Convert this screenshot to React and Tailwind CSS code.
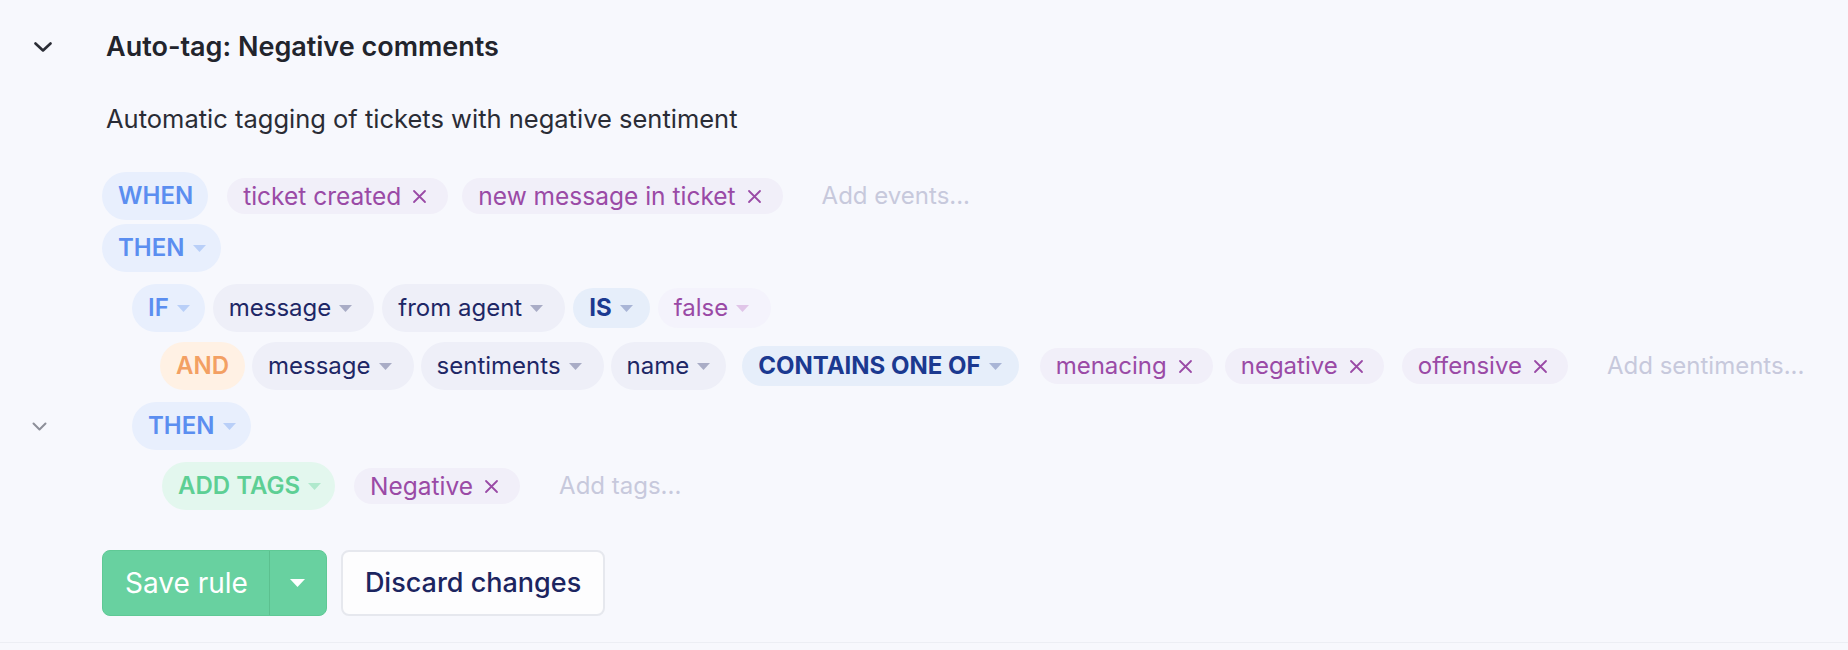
const FONT = { fontFamily: "Inter, 'Noto Sans', sans-serif" };

function Caret({ className = "" }) {
  return (
    <svg width="13" height="7" viewBox="0 0 13 7" className={"ml-[8px] shrink-0 " + className}>
      <path d="M0 0 H13 L6.5 7 Z" fill="currentColor" />
    </svg>
  );
}

function Cross() {
  return (
    <svg width="15" height="15" viewBox="0 0 15 15" className="ml-[11px] shrink-0">
      <path d="M2 2 L13 13 M13 2 L2 13" stroke="currentColor" strokeWidth="1.8" strokeLinecap="round" />
    </svg>
  );
}

// WHEN / THEN / IF
function Keyword({ children, caret = true }) {
  return (
    <div className="flex h-[48px] items-center rounded-full bg-[#e8effd] pl-[16px] pr-[15px] text-[24px] font-semibold text-[#5b8ef0]">
      <span>{children}</span>
      {caret && <Caret className="text-[#b9cff8]" />}
    </div>
  );
}

function Field({ children, tight = false }) {
  return (
    <div className={"flex h-[48px] items-center rounded-full bg-[#eeeff8] pl-[16px] text-[24px] text-[#1e2766] " + (tight ? "pr-[16px]" : "pr-[22px]")}>
      <span>{children}</span>
      <Caret className="text-[#a9acc6]" />
    </div>
  );
}

function Operator({ children }) {
  return (
    <div className="flex h-[40px] items-center rounded-full bg-[#e6eefa] pl-[16px] pr-[17px] text-[24px] font-bold text-[#1b3990]">
      <span>{children}</span>
      <Caret className="text-[#a9b5d6]" />
    </div>
  );
}

function Tag({ children, small = false, className = "" }) {
  return (
    <div className={"flex h-[36px] items-center rounded-full bg-[#f1eff9] pl-[16px] text-[#9a4aa6] " + (small ? "pr-[20px] text-[24px] " : "pr-[21px] text-[24.5px] ") + className}>
      <span>{children}</span>
      <Cross />
    </div>
  );
}

function Placeholder({ children }) {
  return <span className="pl-[39px] text-[24px] text-[#c7c9dc]">{children}</span>;
}

function Gutter({ children }) {
  return <div className="flex w-[102px] shrink-0 items-center">{children}</div>;
}

export default function App() {
  return (
    <div style={FONT} className="min-h-[650px] w-full bg-[#f7f8fd]">
      <div className="h-[643px] border-b border-[#eceef4] pt-[27px]">
        {/* header */}
        <div className="flex h-[40px] items-center">
          <Gutter>
            <svg width="18" height="10" viewBox="0 0 18 10" className="ml-[34px]">
              <path d="M1.5 1.5 L9 8.5 L16.5 1.5" fill="none" stroke="#2b2d36" strokeWidth="2.6" strokeLinecap="round" strokeLinejoin="round" />
            </svg>
          </Gutter>
          <h1 className="ml-[4px] text-[27px] font-semibold text-[#22242c]">Auto-tag: Negative comments</h1>
        </div>

        <div className="mt-[36px] flex h-[32px] items-center">
          <Gutter />
          <p className="ml-[4px] text-[25.5px] text-[#2a2c35]">Automatic tagging of tickets with negative sentiment</p>
        </div>

        {/* WHEN */}
        <div className="mt-[37px] flex h-[48px] items-center">
          <Gutter />
          <Keyword caret={false}>WHEN</Keyword>
          <div className="ml-[19px] flex items-center gap-[14px]">
            <Tag>ticket created</Tag>
            <Tag>new message in ticket</Tag>
          </div>
          <Placeholder>Add events...</Placeholder>
        </div>

        <div className="mt-[4px] flex h-[48px] items-center">
          <Gutter />
          <Keyword>THEN</Keyword>
        </div>

        {/* IF */}
        <div className="mt-[12px] flex h-[48px] items-center">
          <Gutter />
          <div className="ml-[30px] flex items-center gap-[8px]">
            <Keyword>IF</Keyword>
            <Field>message</Field>
            <Field>from agent</Field>
            <Operator>IS</Operator>
            <div className="flex h-[40px] items-center rounded-full bg-[#f4f3fc] pl-[16px] pr-[22px] text-[24px] text-[#9a4aa6]">
              <span>false</span>
              <Caret className="text-[#e0c5e8]" />
            </div>
          </div>
        </div>

        {/* AND */}
        <div className="mt-[10px] flex h-[48px] items-center">
          <Gutter />
          <div className="ml-[58px] flex items-center gap-[7px]">
            <div className="flex h-[48px] items-center rounded-full bg-[#fff1e4] pl-[16px] pr-[16px] text-[24px] font-semibold text-[#f3a063]">AND</div>
            <Field>message</Field>
            <Field>sentiments</Field>
            <Field tight>name</Field>
            <div className="ml-[9px]">
              <Operator>CONTAINS ONE OF</Operator>
            </div>
          </div>
          <div className="ml-[21px] flex items-center">
            <Tag small>menacing</Tag>
            <Tag small className="ml-[12px]">negative</Tag>
            <Tag small className="ml-[18px]">offensive</Tag>
          </div>
          <Placeholder>Add sentiments...</Placeholder>
        </div>

        {/* THEN */}
        <div className="mt-[12px] flex h-[48px] items-center">
          <Gutter>
            <svg width="15" height="9" viewBox="0 0 15 9" className="ml-[32px]">
              <path d="M1.5 1.5 L7.5 7.5 L13.5 1.5" fill="none" stroke="#8d8f99" strokeWidth="2" strokeLinecap="round" strokeLinejoin="round" />
            </svg>
          </Gutter>
          <div className="ml-[30px]">
            <Keyword>THEN</Keyword>
          </div>
        </div>

        <div className="mt-[12px] flex h-[48px] items-center">
          <Gutter />
          <div className="ml-[60px] flex h-[48px] items-center rounded-full bg-[#e3f7ee] pl-[16px] pr-[14px] text-[24px] font-semibold text-[#5dcf94]">
            <span>ADD TAGS</span>
            <Caret className="text-[#b0e9cd]" />
          </div>
          <div className="ml-[19px]">
            <Tag>Negative</Tag>
          </div>
          <Placeholder>Add tags...</Placeholder>
        </div>

        {/* buttons */}
        <div className="mt-[40px] flex items-center">
          <Gutter />
          <div className="flex h-[66px] overflow-hidden rounded-[8px] border border-[#5fc995] bg-[#68d1a0] text-white">
            <span className="flex items-center border-r border-[#5cc08f] pl-[22px] pr-[21px] text-[28px]">Save rule</span>
            <span className="flex w-[56px] items-center justify-center">
              <svg width="15" height="8" viewBox="0 0 15 8">
                <path d="M0 0 H15 L7.5 8 Z" fill="#ffffff" />
              </svg>
            </span>
          </div>
          <button className="ml-[14px] flex h-[66px] items-center rounded-[8px] border-2 border-[#e6e8ee] bg-[#fdfdfe] px-[22px] text-[27px] font-medium text-[#1c2560]">
            Discard changes
          </button>
        </div>
      </div>
    </div>
  );
}
